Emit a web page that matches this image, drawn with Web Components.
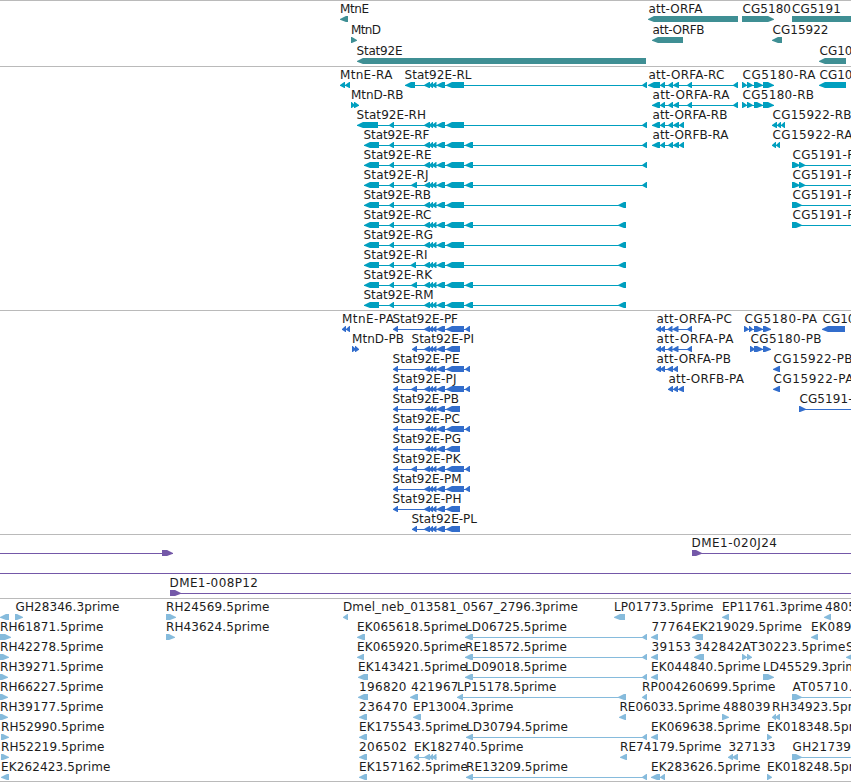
<!DOCTYPE html>
<html lang="en">
<head>
<meta charset="utf-8">
<title>Genome browser</title>
<style>
html,body{margin:0;background:#fff;overflow:hidden}
</style>
</head>
<body>
<genome-browser></genome-browser>
<script>
// Label: [text, x, length]. Exon chain: [direction, start, end, exon, exon, ...] with each exon [start, end].
const core = [[424,430],[429,433],[432,436.5],[436.5,445]];
const longCore = [...core,[446,464]], shortCore = [...core,[446,460]];
const L = (...e) => ['<', e[0][0], e[e.length-1][1], ...e];
const R = (...e) => ['>', e[0][0], e[e.length-1][1], ...e];
const far = [642,647], mid = [618,626], ex = [465,473], five = [364,379], small = [389,394], alt = [411,417];
const attTail = [[668,673],[673,679]];
const cg5180 = R([742,747],[747,753],[754,763],[763,774]);
const est = (t,x,l,g) => ({t:[[t,x,l]], g:[g]});
const row = (...p) => ({t:p.flatMap(q=>q.t), g:p.flatMap(q=>q.g)});
const bare = g => ({t:[], g:[g]});
const tracks = [
 {color:'#3f8f94', step:21, pad:2, rows:[
  row(est('MtnE',339.5,29,L([340,348])), est('att-ORFA',648,54,L([648,738])), est('CG5180',742,48.5,R([742,774])), est('CG5191',791.5,49,R([792,870]))),
  row(est('MtnD',350.5,30,R([351,357])), est('att-ORFB',652,52,L([652,683])), est('CG15922',772,56,L([772,782]))),
  row(est('Stat92E',356,46,L([357,646])), est('CG10',819,33,L([819,846])))
 ]},
 {color:'#009fbf', step:20, pad:3, rows:[
  row(est('MtnE-RA',339.5,52.5,L([340,345],[345,350])), est('Stat92E-RL',404,67,L([405,415],...longCore,far)), est('att-ORFA-RC',648,76,L([648,660],[660,665],...attTail,[687,692],[733,738])), est('CG5180-RA',742,73,cg5180), est('CG10',819,33,L([819,846]))),
  row(est('MtnD-RB',350.5,52.5,R([351,355],[354,359])), est('att-ORFA-RA',652,77,L([652,660],[660,665],...attTail,[687,692],[733,738])), est('CG5180-RB',742,71.5,cg5180)),
  row(est('Stat92E-RH',356,69.5,L([357,378],small,...longCore,far)), est('att-ORFA-RB',652,75,L([652,660],[660,665],...attTail,[679,684])), est('CG15922-RB',772,79,L([772,777],[777,781],[781,785]))),
  row(est('Stat92E-RF',363,66,L(five,small,...longCore,ex,far)), est('att-ORFB-RA',652,76,L([652,660],[660,665],...attTail,[679,684])), est('CG15922-RA',772,80,L([772,776],[776,780]))),
  row(est('Stat92E-RE',363,68,L(five,small,...longCore,ex,far)), est('CG5191-R',792,63,['>',792,870,[792,800],[799,805.5]])),
  row(est('Stat92E-RJ',363,65,L(five,small,alt,...longCore,ex,far)), est('CG5191-R',792,63,['>',792,870,[792,800],[799,805.5]])),
  row(est('Stat92E-RB',363,67.5,L(five,small,...longCore,mid)), est('CG5191-R',792,63,['>',792,870,[792,802]])),
  row(est('Stat92E-RC',363,68,L(five,small,...longCore,ex,mid)), est('CG5191-R',792,63,['>',792,870,[792,802]])),
  est('Stat92E-RG',363,69.5,L(five,small,...longCore,mid)),
  est('Stat92E-RI',363,64,L(five,small,[410.5,416],...longCore,mid)),
  est('Stat92E-RK',363,68.5,L(five,small,alt,...longCore,ex,mid)),
  est('Stat92E-RM',363,70,L(five,small,...longCore,ex,mid))
 ]},
 {color:'#326dcc', step:20, pad:3, rows:[
  row(est('MtnE-PA',341.5,52,L([342,346],[346,350])), est('Stat92E-PF',392,65.5,L([393,398],...longCore,[465,470])), est('att-ORFA-PC',656,75.5,L([656,661],[660,665],...attTail.map(a=>[a[0]-.5,a[1]-.5]),[687,692])), est('CG5180-PA',744,72.5,R([744,749],[749,753],[754,763],[763,771])), est('CG10',822,33,L([822,845]))),
  row(est('MtnD-PB',351.5,52,R([352,356],[355,359])), est('Stat92E-PI',411,62.5,L([412,417],...shortCore)), est('att-ORFA-PA',656,77,L([656,661],[660,665],...attTail.map(a=>[a[0]-.5,a[1]-.5]),[687,692])), est('CG5180-PB',750,71,R([750,755],[754,763],[763,771]))),
  row(est('Stat92E-PE',392,67,L([393,398],...longCore,[465,470])), est('att-ORFA-PB',656,74.5,L([656,661],[660,665],[667,673],[673,678])), est('CG15922-PB',773,79,L([773,780]))),
  row(est('Stat92E-PJ',392,64,L([393,398],alt,...longCore,[465,470])), est('att-ORFB-PA',668,75.5,L([668,673],[673,678],[678,684])), est('CG15922-PA',773,80,L([773,780]))),
  row(est('Stat92E-PB',392,66.5,L([393,398],...shortCore)), est('CG5191-',799,53,['>',799,870,[799,806]])),
  est('Stat92E-PC',392,67.5,L([393,398],...longCore,[465,470])),
  est('Stat92E-PG',392,68.5,L([393,398],...shortCore)),
  est('Stat92E-PK',392,68,L([393,398],alt,...longCore,[465,470])),
  est('Stat92E-PM',392,69,L([393,398],...longCore,[465,470])),
  est('Stat92E-PH',392,69,L([393,398],...shortCore)),
  est('Stat92E-PL',411,65.5,L([412,417],...shortCore))
 ]},
 {color:'#7458a8', step:20, pad:3, rows:[
  row(bare(['>',-5,173,[162,173]]), est('DME1-020J24',691,85.5,['>',692,870,[692,702]])),
  bare(['>',-5,870]),
  est('DME1-008P12',169,88.5,['>',170,870,[170,181]])
 ]},
 {color:'#86bbdc', step:20, pad:2, rows:[
  row(bare(L([0,9])), est('GH28346.3prime',15,104,R([15,23])), est('RH24569.5prime',165.5,103.5,R([166,176])), est('Dmel_neb_013581_0567_2796.3prime',342.5,235,L([343,348])), est('LP01773.5prime',613.5,99.5,L([614,625])), est('EP11761.3prime',721.5,100.5,L([722,729])), est('4805',824.5,31,L([824,831]))),
  row(est('RH61871.5prime',-.5,103.5,R([0,11])), est('RH43624.5prime',165.5,103.5,R([166,175])), est('EK065618.5prime',356.5,109.5,L([357,365])), est('LD06725.5prime',464.5,102,L(ex,far)), est('77764',651,40,L([651,658])), est('EK219029.5prime',691.5,110,L([692,703])), est('EK089',810.5,40.5,L([811,818]))),
  row(est('RH42278.5prime',-.5,103.5,R([0,9])), est('EK065920.5prime',356.5,109.5,L([357,364])), est('RE18572.5prime',464.5,102,L(ex,far)), est('39153',651,39.5,L([651,658])), est('342842',694,48,L([694,704])), est('AT30223.5prime',742,103,R([742,747],[747,752])), est('S',845.5,7.5,L([846,854]))),
  row(est('RH39271.5prime',-.5,103.5,R([0,8])), est('EK143421.5prime',357.5,109,L([358,368])), est('LD09018.5prime',464.5,102,L(ex,far)), est('EK044840.5prime',650.5,109.5,L([651,658])), est('LD45529.3prime',762.5,101.5,R([763,774]))),
  row(est('RH66227.5prime',-.5,103.5,R([0,8])), est('196820',358.5,47.5,L([358,368])), est('421967',410.5,47.5,L([410,418])), est('LP15178.5prime',456.5,99.5,L([457,463],mid)), est('RP004260699.5prime',641.5,133.5,L([642,647])), est('AT05710.',792,60,['>',792,870,[792,802]])),
  row(est('RH39177.5prime',-.5,103.5,R([0,8])), est('236470',358.5,48.5,L([359,367])), est('EP13004.3prime',412.5,100.5,L([413,421])), est('RE06033.5prime',619,101,L([619,626])), est('488039',722.5,47.5,R([722,729])), est('RH34923.5prime',771.5,103.5,L([772,776],[775,780]))),
  row(est('RH52990.5prime',.5,103.5,R([1,9])), est('EK175543.5prime',358.5,109,L([359,367])), est('LD30794.5prime',465.5,102,L([466,473],far)), est('EK069638.5prime',650.5,109.5,L([651,658])), est('EK018348.5prime',766.5,109.5,R([767,772]))),
  row(est('RH52219.5prime',.5,103.5,R([1,9])), est('206502',358.5,48,L([359,367])), est('EK182740.5prime',413.5,109.5,L([414,419],...core.slice(0,3))), est('RE74179.5prime',619.5,101.5,L([620,627])), est('327133',728,47,L([728,733],[732,738])), est('GH21739',792,58.5,['>',792,870,[792,802]])),
  row(est('EK262423.5prime',.5,109.5,L([1,9])), est('EK157162.5prime',358.5,109,L([359,367])), est('RE13209.5prime',465.5,102,L([466,473],far)), est('EK283626.5prime',650.5,109.5,L([651,660],[660,665])), est('EK018248.5prime',766.5,109.5,R([767,772])))
 ]}
];

class FeatureRow extends HTMLElement {
  set data(d) {
    const root = this.shadowRoot || this.attachShadow({mode:'open'});
    const shape = (dir,a,b) => {
      const h = Math.min(b-a, 7);
      const p = dir === '<'
        ? [[a,18.8],[a,18],[a+h*.85,15],[b,15],[b,21],[a+h*.85,21]]
        : [[b,18.8],[b,18],[b-h*.85,15],[a,15],[a,21],[b-h*.85,21]];
      return `<polygon points="${p.map(q=>q.join()).join(' ')}"/>`;
    };
    const glyphs = d.g.map(([dir,a,b,...exons]) =>
      (exons.length === 1 && exons[0][0] === a && exons[0][1] === b ? '' : `<rect x="${a}" y="18" width="${b-a}" height="1"/>`) +
      exons.map(e => shape(dir,...e)).join('')).join('');
    const labels = d.t.map(([t,x,l]) => `<text x="${x+.5}" y="12" textLength="${l}">${t}</text>`).join('');
    root.innerHTML = `<style>
      :host{display:block;height:var(--step)}
      svg{display:block;width:100%;height:100%;overflow:visible;fill:var(--feature)}
      text{fill:#1c1c1c;font:12px "DejaVu Sans",sans-serif}
    </style><svg>${glyphs}${labels}</svg>`;
  }
}
customElements.define('feature-row', FeatureRow);

class GenomeTrack extends HTMLElement {
  set data(d) {
    const root = this.shadowRoot || this.attachShadow({mode:'open'});
    root.innerHTML = `<style>
      :host{display:block;border-top:1px solid #bababa;padding-bottom:${d.pad}px;--step:${d.step}px;--feature:${d.color}}
    </style>`;
    for (const r of d.rows) {
      const el = document.createElement('feature-row');
      el.data = r;
      root.append(el);
    }
  }
}
customElements.define('genome-track', GenomeTrack);

class GenomeBrowser extends HTMLElement {
  connectedCallback() {
    const root = this.attachShadow({mode:'open'});
    root.innerHTML = `<style>
      :host{display:flex;flex-direction:column;width:851px;height:782px;box-sizing:border-box;overflow:hidden;background:#fff}
      .end{height:1px;background:#bababa}
    </style>`;
    for (const t of tracks) {
      const el = document.createElement('genome-track');
      el.data = t;
      root.append(el);
    }
    const end = document.createElement('div');
    end.className = 'end';
    root.append(end);
  }
}
customElements.define('genome-browser', GenomeBrowser);
</script>
</body>
</html>
